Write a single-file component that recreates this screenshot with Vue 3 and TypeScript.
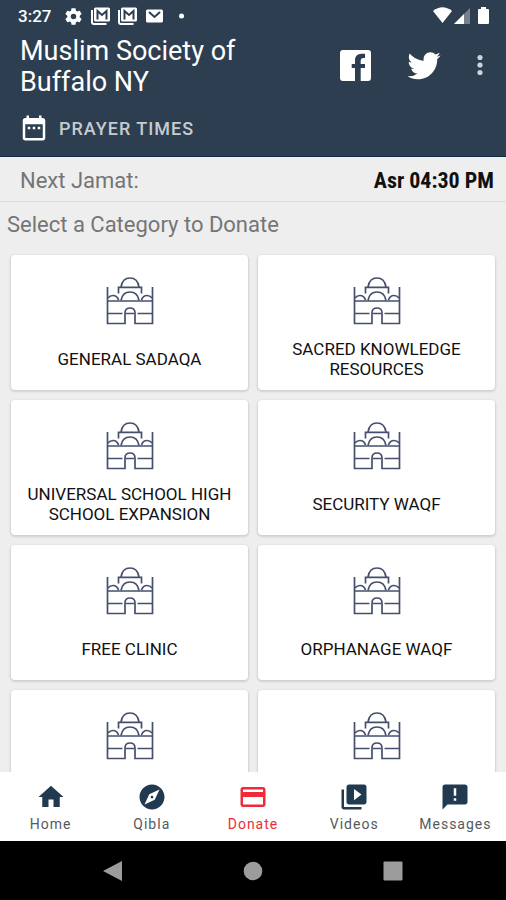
<script setup lang="ts">
interface NavItem {
  label: string
  icon: string
}

const categories: string[] = [
  'General Sadaqa',
  'Sacred Knowledge Resources',
  'Universal School High School Expansion',
  'Security Waqf',
  'Free Clinic',
  'Orphanage Waqf',
  '',
  '',
]

const active = 'Donate'

const navItems: NavItem[] = [
  { label: 'Home', icon: 'M10 20v-6h4v6h5v-8h3L12 3 2 12h3v8z' },
  {
    label: 'Qibla',
    icon: 'M12 10.9c-.61 0-1.1.49-1.1 1.1s.49 1.1 1.1 1.1 1.1-.49 1.1-1.1-.49-1.1-1.1-1.1zM12 2C6.48 2 2 6.48 2 12s4.48 10 10 10 10-4.48 10-10S17.52 2 12 2zm2.19 12.19L6 18l3.81-8.19L18 6l-3.81 8.19z',
  },
  {
    label: 'Donate',
    icon: 'M20 4H4c-1.11 0-1.99.89-1.99 2L2 18c0 1.11.89 2 2 2h16c1.11 0 2-.89 2-2V6c0-1.11-.89-2-2-2zm0 14H4v-6h16v6zm0-10H4V6h16v2z',
  },
  {
    label: 'Videos',
    icon: 'M4 6H2v14c0 1.1.9 2 2 2h14v-2H4V6zm16-4H8c-1.1 0-2 .9-2 2v12c0 1.1.9 2 2 2h12c1.1 0 2-.9 2-2V4c0-1.1-.9-2-2-2zm-8 12.5v-9l6 4.5-6 4.5z',
  },
  {
    label: 'Messages',
    icon: 'M20 2H4c-1.1 0-1.99.9-1.99 2L2 22l4-4h14c1.1 0 2-.9 2-2V4c0-1.1-.9-2-2-2zm-7 13h-2v-2h2v2zm0-4h-2V5h2v6z',
  },
]
</script>

<template>
  <div class="screen">
    <header class="header">
      <div class="status">
        <span class="clock">3:27</span>
        <div class="notices">
          <svg class="notice" viewBox="1 1 22 22">
            <path fill-rule="evenodd" d="M19.14 12.94c.04-.3.06-.61.06-.94 0-.32-.02-.64-.07-.94l2.03-1.58c.18-.14.23-.41.12-.61l-1.92-3.32c-.12-.22-.37-.29-.59-.22l-2.39.96c-.5-.38-1.03-.7-1.62-.94l-.36-2.54c-.04-.24-.24-.41-.48-.41h-3.84c-.24 0-.43.17-.47.41l-.36 2.54c-.59.24-1.13.57-1.62.94l-2.39-.96c-.22-.08-.47 0-.59.22L2.74 8.87c-.12.21-.08.47.12.61l2.03 1.58c-.05.3-.09.63-.09.94s.02.64.07.94l-2.03 1.58c-.18.14-.23.41-.12.61l1.92 3.32c.12.22.37.29.59.22l2.39-.96c.5.38 1.03.7 1.62.94l.36 2.54c.05.24.24.41.48.41h3.84c.24 0 .44-.17.47-.41l.36-2.54c.59-.24 1.13-.56 1.62-.94l2.39.96c.22.08.47 0 .59-.22l1.92-3.32c.12-.22.07-.47-.12-.61l-2.01-1.58zM12 15.2a3.2 3.2 0 1 1 0-6.4 3.2 3.2 0 0 1 0 6.4z" />
          </svg>
          <svg v-for="n in 2" :key="n" class="notice" viewBox="0 0 19 19">
            <path class="line" d="M1 3v12q0 2 2 2H15.500" />
            <rect x="3" y="0.500" width="16" height="14" rx="1.500" />
            <path class="cut" d="M6.500 12.500V4L11 8l4.500-4v8.500" />
          </svg>
          <svg class="notice" viewBox="0 0 19 19">
            <rect x="1" y="2.500" width="17" height="13" rx="1.500" />
            <path class="cut" d="M4 5L9.500 10L15 5" />
          </svg>
          <svg class="notice" viewBox="0 0 19 19"><circle cx="9.500" cy="9" r="2.500" /></svg>
        </div>
        <svg class="signals" viewBox="0 0 58 18">
          <path d="M1 4Q10.500 -3.500 20 4L10.500 16Z" />
          <path d="M22 17L38 1V17Z" opacity=".35" />
          <path d="M22 17L32 7V17Z" />
          <path d="M49 0h5v2h2q1 0 1 1v13q0 1-1 1h-9q-1 0-1-1V3q0-1 1-1h2z" />
        </svg>
      </div>

      <div class="toolbar">
        <h1 class="title">Muslim Society of Buffalo NY</h1>
        <div class="actions">
          <a class="action" href="#facebook" aria-label="Facebook">
            <svg class="facebook" viewBox="0 0 31 31">
              <path d="M3 0h25q3 0 3 3v25q0 3-3 3h-7.300V18H25v-4h-4.300v-3.500Q20.700 8 23 8h2V3.700h-3.500Q15 3.700 15 10.500V14h-3.300v4H15v13H3q-3 0-3-3V3q0-3 3-3z" />
            </svg>
          </a>
          <a class="action" href="#twitter" aria-label="Twitter">
            <svg class="twitter" viewBox="0 0 24 24">
              <path d="M22.460 6c-.77.35-1.600.58-2.460.69.88-.53 1.560-1.370 1.880-2.380-.83.5-1.750.85-2.720 1.050C18.370 4.500 17.260 4 16 4c-2.350 0-4.270 1.920-4.270 4.290 0 .34.04.67.11.98C8.280 9.090 5.110 7.380 3 4.790c-.37.63-.58 1.370-.58 2.150 0 1.490.75 2.810 1.910 3.560-.71 0-1.370-.2-1.950-.5v.03c0 2.080 1.480 3.820 3.440 4.210a4.220 4.220 0 0 1-1.930.07 4.280 4.280 0 0 0 4 2.980 8.521 8.521 0 0 1-5.330 1.840c-.34 0-.68-.02-1.020-.06C3.440 20.290 5.700 21 8.120 21 16 21 20.330 14.460 20.330 8.790c0-.19 0-.37-.01-.56.84-.6 1.560-1.360 2.140-2.230z" />
            </svg>
          </a>
          <button class="action more" type="button" aria-label="More options">
            <svg class="dots" viewBox="0 0 6 22">
              <circle cx="3" cy="3.500" r="2.600" />
              <circle cx="3" cy="11" r="2.600" />
              <circle cx="3" cy="18.500" r="2.600" />
            </svg>
          </button>
        </div>
      </div>

      <button class="prayer" type="button">
        <svg class="calendar" viewBox="0 0 24 24">
          <path d="M9 11H7v2h2v-2zm4 0h-2v2h2v-2zm4 0h-2v2h2v-2zm2-7h-1V2h-2v2H8V2H6v2H5c-1.110 0-1.990.9-1.990 2L3 20c0 1.100.89 2 2 2h14c1.100 0 2-.9 2-2V6c0-1.100-.9-2-2-2zm0 16H5V9h14v11z" />
        </svg>
        <span>Prayer Times</span>
      </button>
    </header>

    <div class="next">
      <span>Next Jamat:</span>
      <strong class="next-time">Asr 04:30 PM</strong>
    </div>

    <main class="content">
      <h2 class="prompt">Select a Category to Donate</h2>
      <div class="grid">
        <button v-for="(name, i) in categories" :key="i" class="card" type="button">
          <svg class="mosque" viewBox="0 0 48 48">
            <path d="M1.500 10V46.500H19V36Q19 31 24 31T29 36V46.500H46.500V10" />
            <path d="M1.500 24H46.500M1.500 36.500H16.500M31.500 36.500H46.500M20 36.500H28" />
            <path d="M12.500 16.500V10.300H35.500V16.500M15 10C16 3.500 19.500 1 24 1S32 3.500 33 10" />
            <path d="M15 23.500C16 17.500 19.500 15 24 15S32 17.500 33 23.500" />
            <path d="M2 21Q4 18.500 7 18.500Q11 18.500 12.500 23M46 21Q44 18.500 41 18.500Q37 18.500 35.500 23" />
          </svg>
          <span class="card-label">{{ name }}</span>
        </button>
      </div>
    </main>

    <nav class="tabs">
      <a
        v-for="item in navItems"
        :key="item.label"
        class="tab"
        :class="{ active: item.label === active }"
        :href="'#' + item.label.toLowerCase()"
      >
        <svg class="tab-icon" viewBox="0 0 24 24"><path :d="item.icon" /></svg>
        <span>{{ item.label }}</span>
      </a>
    </nav>

    <div class="system">
      <button class="system-key" type="button" aria-label="Back">
        <svg viewBox="0 0 20 20"><path d="M0 10L19 0V20Z" /></svg>
      </button>
      <button class="system-key" type="button" aria-label="Home screen">
        <svg viewBox="0 0 20 20"><circle cx="10" cy="10" r="9.300" /></svg>
      </button>
      <button class="system-key" type="button" aria-label="Recent apps">
        <svg viewBox="0 0 20 20"><rect x="0.500" y="0.500" width="19" height="19" rx="1" /></svg>
      </button>
    </div>
  </div>
</template>

<style>
body {
  margin: 0;
}
</style>

<style scoped>
.screen {
  display: flex;
  flex-direction: column;
  height: 100vh;
  overflow: hidden;
  background: #eeeeee;
  color: #757575;
  font-family: Roboto, "Liberation Sans", sans-serif;
}

button {
  margin: 0;
  padding: 0;
  border: 0;
  background: none;
  color: inherit;
  font: inherit;
}

a {
  color: inherit;
  text-decoration: none;
}

svg {
  display: block;
  fill: currentColor;
}

.header {
  flex: none;
  background: #2d3e50;
  border-bottom: 1px solid #0e2b3d;
  color: #ffffff;
}

.status {
  display: flex;
  align-items: center;
  height: 32px;
  padding: 0 16px 0 18px;
}

.clock {
  font-size: 17px;
  font-weight: 500;
  line-height: 32px;
}

.notices {
  display: flex;
  gap: 8px;
  margin-left: 13px;
}

.notice {
  width: 19px;
  height: 19px;
}

.line,
.cut {
  fill: none;
  stroke: #ffffff;
  stroke-width: 2;
}

.cut {
  stroke: #2d3e50;
}

.signals {
  width: 58px;
  height: 18px;
  margin-left: auto;
}

.toolbar {
  display: flex;
  align-items: flex-start;
  justify-content: space-between;
  padding: 4px 23px 2px 20px;
}

.title {
  max-width: 240px;
  margin: 0;
  font-size: 27px;
  font-weight: 400;
  line-height: 31px;
}

.actions {
  display: flex;
  align-items: center;
  gap: 34px;
  height: 58px;
}

.facebook {
  width: 31px;
  height: 31px;
}

.twitter {
  width: 38px;
  height: 38px;
}

.dots {
  width: 6px;
  height: 22px;
}

.more {
  color: #ccd3dc;
}

.prayer {
  display: flex;
  align-items: center;
  gap: 10px;
  height: 56px;
  padding: 0 19px;
  color: #c5cbd1;
  font-size: 18px;
  font-weight: 500;
  letter-spacing: 1px;
  text-transform: uppercase;
}

.calendar {
  width: 30px;
  height: 30px;
  color: #ffffff;
}

.next {
  display: flex;
  flex: none;
  align-items: center;
  justify-content: space-between;
  box-sizing: border-box;
  height: 45px;
  padding: 2px 12px 0 20px;
  border-bottom: 1px solid #dddddd;
  font-size: 22px;
}

.next-time {
  color: #111111;
  font-family: "Roboto Condensed", Roboto, "Liberation Sans", sans-serif;
  font-weight: 700;
}

.content {
  flex: 1;
  min-height: 0;
  overflow: hidden;
}

.prompt {
  margin: 0;
  padding: 7px;
  font-size: 22px;
  font-weight: 400;
  line-height: 32px;
}

.grid {
  display: grid;
  grid-template-columns: 1fr 1fr;
  gap: 10px;
  padding: 7px 11px;
}

.card {
  display: flex;
  flex-direction: column;
  align-items: center;
  gap: 14px;
  padding: 22px 8px 11px;
  border-radius: 4px;
  background: #ffffff;
  box-shadow: 0 1px 2px 1px #d0d0d0;
  color: #111111;
}

.mosque {
  width: 48px;
  height: 48px;
  fill: none;
  stroke: #46506d;
  stroke-width: 1.7;
}

.card-label {
  display: flex;
  align-items: center;
  min-height: 40px;
  font-size: 17px;
  line-height: 20px;
  text-align: center;
  text-transform: uppercase;
}

.tabs {
  display: grid;
  flex: none;
  grid-template-columns: repeat(5, 1fr);
  background: #ffffff;
}

.tab {
  display: flex;
  flex-direction: column;
  align-items: center;
  gap: 3px;
  padding: 10px 0 8px;
  color: #55595e;
  font-size: 14px;
  letter-spacing: 1px;
  line-height: 18px;
}

.tab-icon {
  width: 30px;
  height: 30px;
  color: #223a50;
}

.active,
.active .tab-icon {
  color: #ee2b37;
}

.system {
  display: flex;
  flex: none;
  align-items: center;
  justify-content: center;
  gap: 120px;
  height: 59px;
  background: #000000;
  color: #9c9c9c;
}

.system-key svg {
  width: 20px;
  height: 20px;
}
</style>
